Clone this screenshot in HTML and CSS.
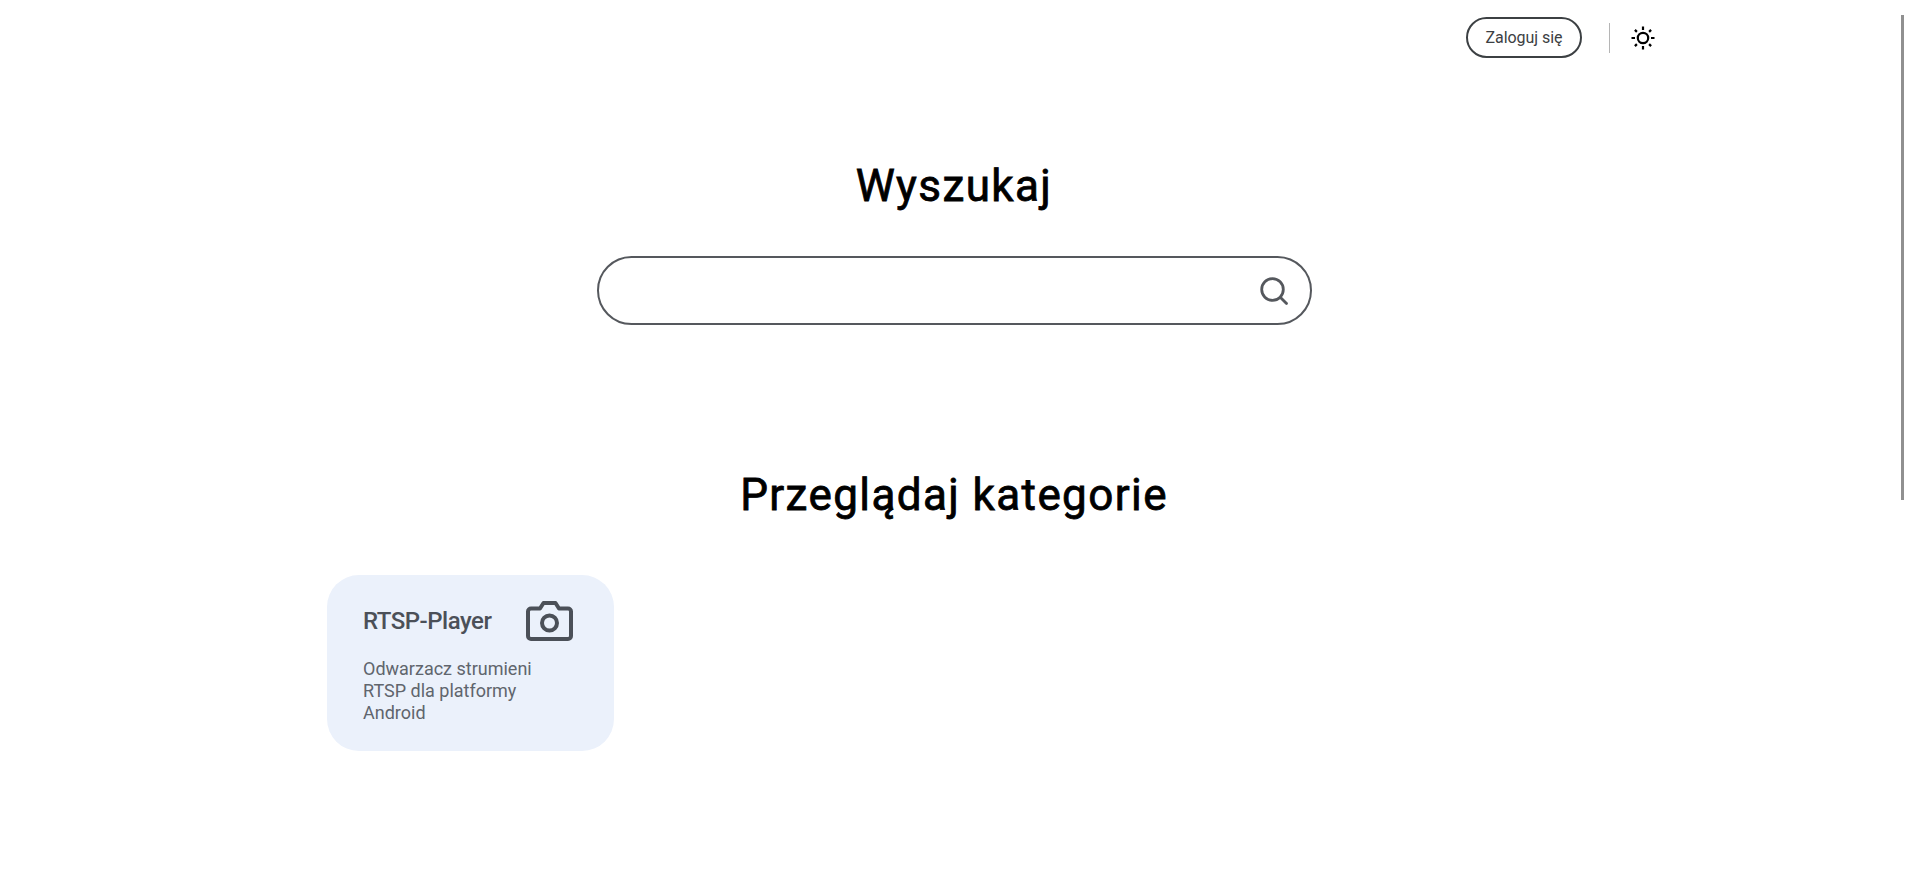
FILE: index.html
```html
<!DOCTYPE html>
<html lang="pl">
<head>
<meta charset="utf-8">
<title>Wyszukaj</title>
<link rel="stylesheet" href="styles.css">
</head>
<body>
<div class="page">
  <header class="topbar">
    <a class="login" href="#">Zaloguj się</a>
    <span class="divider"></span>
    <button class="theme" aria-label="Motyw">
      <svg width="26" height="26" viewBox="0 0 26 26" fill="none" stroke="#000" stroke-width="2.200" stroke-linecap="butt"><circle cx="13" cy="13" r="5.200"/><path d="M13 1.500V5M13 21v3.500M1.500 13H5M21 13h3.500M4.900 4.900l2 2M19.100 19.100l2 2M4.900 21.100l2-2M19.100 6.900l2-2"/></svg>
    </button>
  </header>
  <main class="main">
    <h1 class="title">Wyszukaj</h1>
    <div class="search">
      <svg class="search-icon" width="32" height="32" viewBox="0 0 32 32" fill="none" stroke="#55585d" stroke-width="2.800" stroke-linecap="round"><circle cx="14.500" cy="14.500" r="10.800"/><path d="M22.500 22.500l6 6"/></svg>
    </div>
    <h2 class="title browse">Przeglądaj kategorie</h2>
    <section class="cards">
      <a class="card" href="#">
        <div class="card-head">
          <span class="card-title">RTSP-Player</span>
          <svg width="47" height="40" viewBox="0 0 47 40" fill="none" stroke="#4b5058" stroke-width="4" stroke-linejoin="round"><path d="M5 7.500h9l3.500-5.500h12l3.500 5.500h9a3 3 0 0 1 3 3V35a3 3 0 0 1-3 3H5a3 3 0 0 1-3-3V10.500a3 3 0 0 1 3-3z"/><circle cx="23.500" cy="22" r="7.500"/></svg>
        </div>
        <p class="card-text">Odwarzacz strumieni RTSP dla platformy Android</p>
      </a>
    </section>
  </main>
</div>
<div class="scroll-thumb"></div>
</body>
</html>
```
FILE: styles.css
```css
html, body { margin: 0; height: 100%; overflow: hidden; background: #fff; }
body { font-family: Roboto, sans-serif; color: #000; }
a { text-decoration: none; }
.page { width: 1908px; }
.topbar { display: flex; align-items: center; height: 75px; padding-left: 1466px; box-sizing: border-box; }
.login { box-sizing: border-box; width: 116px; height: 41px; border: 2px solid #3c4043; border-radius: 21px; display: flex; align-items: center; justify-content: center; font-size: 16px; letter-spacing: -0.050px; color: #3c4043; }
.divider { width: 1px; height: 30px; background: #b5b5b5; margin-left: 27px; }
.theme { width: 26px; height: 26px; padding: 0; margin-left: 20px; border: 0; background: none; display: block; }
.theme svg { display: block; }
.main { display: flex; flex-direction: column; align-items: center; }
.title { margin: 0; font-size: 44px; line-height: 52px; font-weight: 400; letter-spacing: 1.400px; -webkit-text-stroke: 0.800px #000; text-align: center; }
.main > .title:first-child { margin-top: 85px; }
.search { box-sizing: border-box; width: 715px; height: 69px; margin-top: 44px; border: 2px solid #55585d; border-radius: 35px; display: flex; align-items: center; justify-content: flex-end; padding-right: 20px; }
.browse { margin-top: 144px; }
.cards { align-self: flex-start; margin: 54px 0 0 327px; }
.card { box-sizing: border-box; display: block; width: 287px; height: 176px; border-radius: 32px; background: #ebf1fb; padding: 24px 41px 0 36px; }
.card-head { display: flex; align-items: center; justify-content: space-between; height: 44px; }
.card-title { font-size: 24px; font-weight: 500; letter-spacing: -0.500px; color: #4b5058; }
.card-text { margin: 15px 0 0; font-size: 18px; line-height: 22px; color: #60656d; }
.scroll-thumb { position: fixed; right: 16px; top: 15px; width: 3px; height: 485px; background: #909090; }
```
